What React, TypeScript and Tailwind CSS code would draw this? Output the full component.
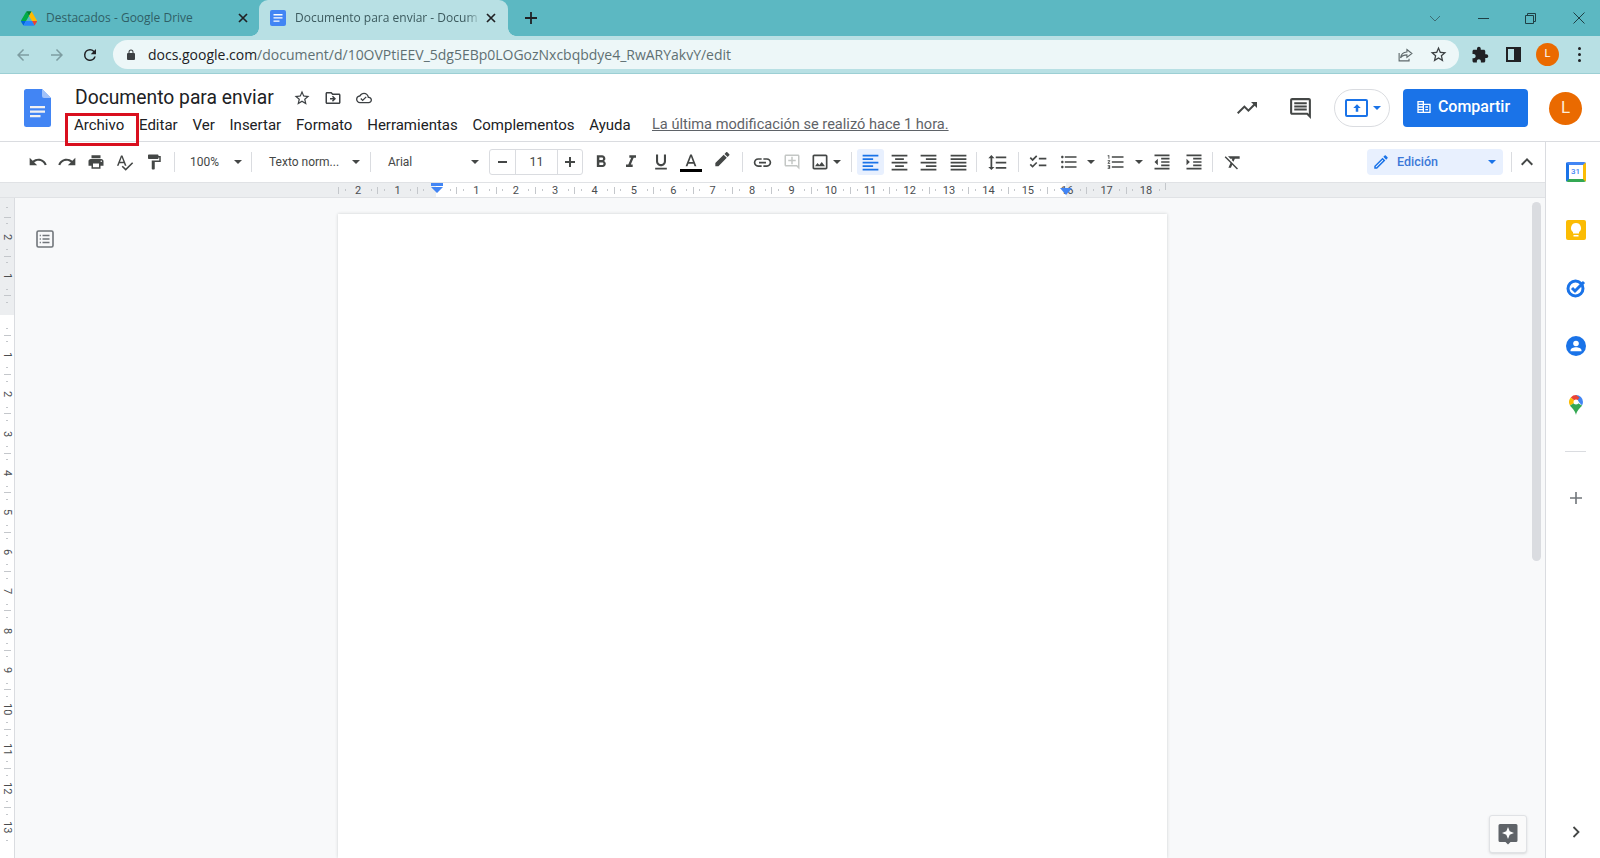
import React from "react";

const P = {
  undo: "M12.5 8c-2.65 0-5.05.99-6.9 2.6L2 7v9h9l-3.62-3.62c1.39-1.16 3.16-1.88 5.12-1.88 3.54 0 6.55 2.31 7.6 5.5l2.37-.78C21.08 11.03 17.15 8 12.5 8z",
  redo: "M18.4 10.6C16.55 8.99 14.15 8 11.5 8c-4.65 0-8.58 3.03-9.96 7.22L3.9 16c1.05-3.19 4.05-5.5 7.6-5.5 1.95 0 3.73.72 5.12 1.88L13 16h9V7l-3.6 3.6z",
  print: "M19 8H5c-1.66 0-3 1.34-3 3v6h4v4h12v-4h4v-6c0-1.66-1.34-3-3-3zm-3 11H8v-5h8v5zm3-7c-.55 0-1-.45-1-1s.45-1 1-1 1 .45 1 1-.45 1-1 1zm-1-9H6v4h12V3z",
  spell: "M12.45 16h2.09L9.43 3H7.57L2.46 16h2.09l1.12-3h5.64l1.14 3zm-6.02-5L8.5 5.48 10.57 11H6.43zm15.16.59l-8.09 8.09L9.83 16l-1.41 1.41 5.09 5.09L23 13l-1.41-1.41z",
  paint: "M18 4V3c0-.55-.45-1-1-1H5c-.55 0-1 .45-1 1v4c0 .55.45 1 1 1h12c.55 0 1-.45 1-1V6h1v4H9v11c0 .55.45 1 1 1h2c.55 0 1-.45 1-1v-9h8V4h-3z",
  bold: "M15.6 10.79c.97-.67 1.65-1.77 1.65-2.79 0-2.26-1.75-4-4-4H7v14h7.04c2.09 0 3.71-1.7 3.71-3.79 0-1.52-.86-2.82-2.15-3.42zM10 6.5h3c.83 0 1.5.67 1.5 1.5s-.67 1.5-1.5 1.5h-3v-3zm3.5 9H10v-3h3.5c.83 0 1.5.67 1.5 1.5s-.67 1.5-1.5 1.5z",
  italic: "M10 4v3h2.21l-3.42 8H6v3h8v-3h-2.21l3.42-8H18V4z",
  underline: "M12 17c3.31 0 6-2.69 6-6V3h-2.5v8c0 1.93-1.57 3.5-3.5 3.5S8.5 12.93 8.5 11V3H6v8c0 3.31 2.69 6 6 6zm-7 2v2h14v-2H5z",
  marker: "M17.75 7L14 3.25l-10 10V17h3.75l10-10zm2.96-2.96c.39-.39.39-1.02 0-1.41L18.37.29c-.39-.39-1.02-.39-1.41 0L15 2.25 18.75 6l1.96-1.96z",
  link: "M3.9 12c0-1.71 1.39-3.1 3.1-3.1h4V7H7c-2.76 0-5 2.24-5 5s2.24 5 5 5h4v-1.9H7c-1.71 0-3.1-1.39-3.1-3.1zM8 13h8v-2H8v2zm9-6h-4v1.9h4c1.71 0 3.1 1.39 3.1 3.1s-1.39 3.1-3.1 3.1h-4V17h4c2.76 0 5-2.24 5-5s-2.24-5-5-5z",
  addComment: "M21.99 4c0-1.1-.89-2-1.99-2H4c-1.1 0-2 .9-2 2v12c0 1.1.9 2 2 2h14l4 4-.01-18zM20 4v13.17L18.83 16H4V4h16zM13 5h-2v4H7v2h4v4h2v-4h4V9h-4z",
  image: "M19 5v14H5V5h14m0-2H5c-1.1 0-2 .9-2 2v14c0 1.1.9 2 2 2h14c1.1 0 2-.9 2-2V5c0-1.1-.9-2-2-2zm-4.86 8.86l-3 3.87L9 13.14 6 17h12l-3.86-5.14z",
  left: "M15 15H3v2h12v-2zm0-8H3v2h12V7zM3 13h18v-2H3v2zm0 8h18v-2H3v2zM3 3v2h18V3H3z",
  center: "M7 15v2h10v-2H7zm-4 6h18v-2H3v2zm0-8h18v-2H3v2zm4-6v2h10V7H7zM3 3v2h18V3H3z",
  right: "M3 21h18v-2H3v2zm6-4h12v-2H9v2zm-6-4h18v-2H3v2zm6-4h12V7H9v2zM3 3v2h18V3H3z",
  justify: "M3 21h18v-2H3v2zm0-4h18v-2H3v2zm0-4h18v-2H3v2zm0-4h18V7H3v2zm0-6v2h18V3H3z",
  spacing: "M6 7h2.5L5 3.5 1.5 7H4v10H1.5L5 20.5 8.5 17H6V7zm4-2v2h12V5H10zm0 14h12v-2H10v2zm0-6h12v-2H10v2z",
  check: "M22 7h-9v2h9V7zm0 8h-9v2h9v-2zM5.54 11L2 7.46l1.41-1.41 2.12 2.12 4.24-4.24 1.41 1.41L5.54 11zm0 8L2 15.46l1.41-1.41 2.12 2.12 4.24-4.24 1.41 1.41L5.54 19z",
  bullets: "M4 10.5c-.83 0-1.5.67-1.5 1.5s.67 1.5 1.5 1.5 1.5-.67 1.5-1.5-.67-1.5-1.5-1.5zm0-6c-.83 0-1.5.67-1.5 1.5S3.17 7.5 4 7.5 5.5 6.83 5.5 6 4.83 4.5 4 4.5zm0 12c-.83 0-1.5.68-1.5 1.5s.68 1.5 1.5 1.5 1.5-.68 1.5-1.5-.67-1.5-1.5-1.5zM7 19h14v-2H7v2zm0-6h14v-2H7v2zm0-8v2h14V5H7z",
  numbered: "M2 17h2v.5H3v1h1v.5H2v1h3v-4H2v1zm1-9h1V4H2v1h1v3zm-1 3h1.8L2 13.1v.9h3v-1H3.2L5 10.9V10H2v1zm5-6v2h14V5H7zm0 14h14v-2H7v2zm0-6h14v-2H7v2z",
  outdent: "M11 17h10v-2H11v2zm-8-5l4 4V8l-4 4zm0 9h18v-2H3v2zM3 3v2h18V3H3zm8 6h10V7H11v2zm0 4h10v-2H11v2z",
  indent: "M3 21h18v-2H3v2zM3 8v8l4-4-4-4zm8 9h10v-2H11v2zM3 3v2h18V3H3zm8 6h10V7H11v2zm0 4h10v-2H11v2z",
  clear: "M3.27 5L2 6.27l6.97 6.97L6.5 19h3l1.57-3.66L16.73 21 18 19.73 3.55 5.27 3.27 5zM6 5v.18L8.82 8h2.4l-.72 1.68 2.1 2.1L14.21 8H20V5H6z",
  pencil: "M14.06 9.02l.92.92L5.92 19H5v-.92l9.06-9.06M17.66 3c-.25 0-.51.1-.7.29l-1.83 1.83 3.75 3.75 1.83-1.83c.39-.39.39-1.02 0-1.41l-2.34-2.34c-.2-.2-.45-.29-.71-.29zm-3.6 3.19L3 17.25V21h3.75L17.81 9.94l-3.75-3.75z",
  less: "M12 8l-6 6 1.41 1.41L12 10.83l4.59 4.58L18 14z",
  trend: "M16 6l2.29 2.29-4.88 4.88-4-4L2 16.59 3.41 18l6-6 4 4 6.3-6.29L22 12V6z",
  comment: "M21.99 4c0-1.1-.89-2-1.99-2H4c-1.1 0-2 .9-2 2v12c0 1.1.9 2 2 2h14l4 4-.01-18zM20 4v13.17L18.83 16H4V4h16zM6 12h12v2H6zm0-3h12v2H6zm0-3h12v2H6z",
  domain: "M12 7V3H2v18h20V7H12zM10 19H4v-2h6v2zm0-4H4v-2h6v2zm0-4H4V9h6v2zm0-4H4V5h6v2zm10 12h-8V9h8v10zm-2-8h-4v2h4v-2zm0 4h-4v2h4v-2z",
  star: "M22 9.24l-7.19-.62L12 2 9.19 8.63 2 9.24l5.46 4.73L5.82 21 12 17.27 18.18 21l-1.63-7.03L22 9.24zM12 15.4l-3.76 2.27 1-4.28-3.32-2.88 4.38-.38L12 6.1l1.71 4.04 4.38.38-3.32 2.88 1 4.28L12 15.4z",
  move: "M20 6h-8l-2-2H4c-1.1 0-1.99.9-1.99 2L2 18c0 1.1.9 2 2 2h16c1.1 0 2-.9 2-2V8c0-1.1-.9-2-2-2zm0 12H4V6h5.17l2 2H20v10zm-8.01-9l-1.41 1.41L12.16 12H8v2h4.16l-1.59 1.59L11.99 17 16 13.01 11.99 9z",
  cloud: "M19.35 10.04C18.67 6.59 15.64 4 12 4 9.11 4 6.6 5.64 5.35 8.04 2.34 8.36 0 10.91 0 14c0 3.31 2.69 6 6 6h13c2.76 0 5-2.24 5-5 0-2.64-2.05-4.78-4.65-4.96zM19 18H6c-2.21 0-4-1.79-4-4 0-2.05 1.53-3.76 3.56-3.97l1.07-.11.5-.95C8.08 7.14 9.94 6 12 6c2.62 0 4.88 1.86 5.39 4.43l.3 1.5 1.53.11c1.56.1 2.78 1.41 2.78 2.96 0 1.65-1.35 3-3 3zm-9-3.82l-2.09-2.09L6.5 13.5 10 17l6.01-6.01-1.41-1.41z",
  puzzle: "M20.5 11H19V7c0-1.1-.9-2-2-2h-4V3.5C13 2.12 11.88 1 10.5 1S8 2.12 8 3.5V5H4c-1.1 0-1.99.9-1.99 2v3.8H3.5c1.49 0 2.7 1.21 2.7 2.7s-1.21 2.7-2.7 2.7H2V20c0 1.1.9 2 2 2h3.8v-1.5c0-1.49 1.21-2.7 2.7-2.7 1.49 0 2.7 1.21 2.7 2.7V22H17c1.1 0 2-.9 2-2v-4h1.5c1.38 0 2.5-1.12 2.5-2.5S21.88 11 20.5 11z",
  textA: "M11 3L5.5 17h2.25l1.12-3h6.25l1.12 3h2.25L13 3h-2zm-1.38 9L12 5.67 14.38 12H9.62z",
};

function I({ d, s = 18, c = "#444746" }: { d: string; s?: number; c?: string }) {
  return (
    <svg width={s} height={s} viewBox="0 0 24 24" fill={c} className="block shrink-0">
      <path d={d} />
    </svg>
  );
}

function Caret({ c = "#444746" }: { c?: string }) {
  return <span className="block h-0 w-0 shrink-0 border-x-[4px] border-t-[4px] border-x-transparent" style={{ borderTopColor: c }} />;
}

function Tb({ d, w = "w-[29px]", s = 18, c }: { d: string; w?: string; s?: number; c?: string }) {
  return (
    <div className={`${w} flex h-[26px] shrink-0 items-center justify-center`}>
      <I d={d} s={s} c={c} />
    </div>
  );
}

function Sep({ className = "" }: { className?: string }) {
  return <div className={`h-[20px] w-px shrink-0 bg-[#dadce0] ${className}`} />;
}

function DriveLogo() {
  return (
    <svg width="16" height="15" viewBox="0 0 87.3 78" className="block shrink-0">
      <path d="M6.6 66.85l3.85 6.65c.8 1.4 1.95 2.5 3.3 3.3L27.5 53H0c0 1.55.4 3.1 1.2 4.5z" fill="#0066da" />
      <path d="M43.65 25L29.9 1.2c-1.35.8-2.5 1.9-3.3 3.3L1.2 48.5C.4 49.9 0 51.45 0 53h27.5z" fill="#00ac47" />
      <path d="M73.55 76.8c1.35-.8 2.5-1.9 3.3-3.3l1.6-2.75 7.65-13.25c.8-1.4 1.2-2.95 1.2-4.5H59.8l5.85 11.5z" fill="#ea4335" />
      <path d="M43.65 25L57.4 1.2C56.05.4 54.5 0 52.9 0H34.4c-1.6 0-3.15.45-4.5 1.2z" fill="#00832d" />
      <path d="M59.8 53H27.5L13.75 76.8c1.35.8 2.9 1.2 4.5 1.2h50.8c1.6 0 3.15-.45 4.5-1.2z" fill="#2684fc" />
      <path d="M73.4 26.5L60.7 4.5c-.8-1.4-1.95-2.5-3.3-3.3L43.65 25 59.8 53h27.45c0-1.55-.4-3.1-1.2-4.5z" fill="#ffba00" />
    </svg>
  );
}

function DocsLogo({ w, h }: { w: number; h: number }) {
  return (
    <svg width={w} height={h} viewBox="0 0 27 38" className="block shrink-0">
      <path d="M2.5 0H18l9 9v26.5a2.5 2.5 0 0 1-2.5 2.5h-22A2.5 2.5 0 0 1 0 35.5v-33A2.5 2.5 0 0 1 2.5 0z" fill="#4285f4" />
      <path d="M18 0l9 9h-7a2 2 0 0 1-2-2z" fill="#a1c2fa" />
      <path d="M6 17h15v2.2H6zM6 21.5h15v2.2H6zM6 26h10.5v2.2H6z" fill="#f1f1f1" />
    </svg>
  );
}

function DocsTabIcon() {
  return (
    <svg width="16" height="16" viewBox="0 0 16 16" className="block shrink-0">
      <rect width="16" height="16" rx="2" fill="#4285f4" />
      <path d="M3.5 4h9v1.4h-9zM3.5 7.2h9v1.4h-9zM3.5 10.4h6v1.4h-6z" fill="#ffffff" />
    </svg>
  );
}

function Tick({ big }: { big?: boolean }) {
  return <span className={`block w-px shrink-0 ${big ? "h-[7px] bg-[#c4c7cb]" : "h-[2px] bg-[#c4c7cb]"}`} />;
}

function HCell({ n, bg }: { n?: number; bg: string }) {
  return (
    <div className={`flex h-full w-[39.4px] shrink-0 items-center justify-between ${bg}`}>
      <Tick big />
      <Tick />
      <span className="w-[14px] text-center text-[11px] leading-none text-[#4a4d50]">{n}</span>
      <Tick />
      <span className="w-0" />
    </div>
  );
}

function VTick({ big }: { big?: boolean }) {
  return <span className={`block h-px shrink-0 ${big ? "w-[7px] bg-[#c4c7cb]" : "w-[2px] bg-[#c4c7cb]"}`} />;
}

function VCell({ n, bg }: { n?: number; bg: string }) {
  return (
    <div className={`flex h-[39.4px] w-full shrink-0 flex-col items-center justify-between ${bg}`}>
      <VTick big />
      <VTick />
      <span className="flex h-[14px] items-center justify-center text-[11px] leading-none text-[#4a4d50] [writing-mode:vertical-rl]">{n}</span>
      <VTick />
      <span className="h-0" />
    </div>
  );
}

const menu = ["Archivo", "Editar", "Ver", "Insertar", "Formato", "Herramientas", "Complementos", "Ayuda"];

export default function App() {
  const sans = { fontFamily: "Roboto, 'Liberation Sans', sans-serif" };
  return (
    <div className="flex h-[858px] w-[1600px] flex-col overflow-hidden bg-white" style={sans}>
      {/* Tab strip */}
      <div className="flex h-[36px] shrink-0 items-stretch bg-[#5cb8c2] font-['Open_Sans',sans-serif]">
        <div className="flex w-[259px] shrink-0 items-center pl-[21px] text-[12px] text-[#2f5f66]">
          <DriveLogo />
          <span className="ml-[9px] w-[192px] truncate">Destacados - Google Drive</span>
          <svg width="10" height="10" viewBox="0 0 10 10" className="block shrink-0"><path d="M1 1l8 8M9 1L1 9" stroke="#202124" strokeWidth="1.7" /></svg>
        </div>
        <div className="relative flex w-[249px] shrink-0 items-center rounded-t-[9px] bg-[#b8e0e4] pl-[11px] text-[12px] text-[#3c5a5e]">
          <span className="absolute bottom-0 left-[-8px] h-[8px] w-[8px] bg-[radial-gradient(circle_at_0_0,#5cb8c2_7.5px,#b8e0e4_8px)]" />
          <span className="absolute bottom-0 right-[-8px] h-[8px] w-[8px] bg-[radial-gradient(circle_at_100%_0,#5cb8c2_7.5px,#b8e0e4_8px)]" />
          <DocsTabIcon />
          <span className="ml-[9px] w-[188px] whitespace-nowrap [mask-image:linear-gradient(to_right,black_91%,transparent_99%)]">Documento para enviar - Docum</span>
          <svg width="10" height="10" viewBox="0 0 10 10" className="ml-[3px] block shrink-0"><path d="M1 1l8 8M9 1L1 9" stroke="#202124" strokeWidth="1.7" /></svg>
        </div>
        <div className="ml-[17px] flex items-center">
          <svg width="12" height="12" viewBox="0 0 12 12" className="block"><path d="M6 0v12M0 6h12" stroke="#202124" strokeWidth="1.8" /></svg>
        </div>
        <div className="flex-1" />
        <div className="flex items-center">
          <svg width="12" height="7" viewBox="0 0 12 7" className="block"><path d="M1 1l5 5 5-5" fill="none" stroke="#3d6d73" strokeWidth="1" /></svg>
          <div className="ml-[37px] h-px w-[11px] bg-[#1f3f44]" />
          <svg width="11" height="11" viewBox="0 0 11 11" className="ml-[36px] block"><path d="M.5 2.5h8v8h-8zM2.5 2.5v-2h8v8h-2" fill="none" stroke="#1f3f44" strokeWidth="1" /></svg>
          <svg width="12" height="12" viewBox="0 0 12 12" className="ml-[37px] mr-[15px] block"><path d="M.5.5l11 11M11.5.5l-11 11" stroke="#1f3f44" strokeWidth="1" /></svg>
        </div>
      </div>

      {/* Address bar */}
      <div className="flex h-[38px] shrink-0 items-center border-b border-[#9ccfd4] bg-[#b8e0e4]">
        <div className="ml-[14px]"><svg width="18" height="18" viewBox="0 0 24 24" className="block"><path d="M20 11H7.83l5.59-5.59L12 4l-8 8 8 8 1.41-1.41L7.83 13H20z" fill="#7d9da1" /></svg></div>
        <div className="ml-[16px]"><svg width="18" height="18" viewBox="0 0 24 24" className="block"><path d="M12 4l-1.41 1.41L16.17 11H4v2h12.17l-5.58 5.59L12 20l8-8z" fill="#7d9da1" /></svg></div>
        <div className="ml-[15px]"><svg width="18" height="18" viewBox="0 0 24 24" className="block"><path d="M17.65 6.35A7.96 7.96 0 0 0 12 4a8 8 0 1 0 7.73 10h-2.08A6 6 0 1 1 12 6c1.66 0 3.14.69 4.22 1.78L13 11h7V4l-2.35 2.35z" fill="#202124" /></svg></div>
        <div className="ml-[14px] flex h-[29px] w-[1346px] shrink-0 items-center rounded-full bg-[#edf7f8]">
          <svg width="12" height="12" viewBox="0 0 24 24" className="ml-[12px] block"><path d="M18 8h-1V6A5 5 0 0 0 7 6v2H6a2 2 0 0 0-2 2v10a2 2 0 0 0 2 2h12a2 2 0 0 0 2-2V10a2 2 0 0 0-2-2zM9 6a3 3 0 0 1 6 0v2H9V6z" fill="#3c4043" /></svg>
          <span className="ml-[11px] whitespace-nowrap font-['Open_Sans',sans-serif] text-[14px] tracking-[-0.01px] text-[#5f7073]">
            <span className="text-[#202124]">docs.google.com</span>/document/d/10OVPtiEEV_5dg5EBp0LOGozNxcbqbdye4_RwARYakvY/edit
          </span>
          <div className="flex-1" />
          <svg width="17" height="17" viewBox="0 0 24 24" fill="none" stroke="#5f6a6c" strokeWidth="1.6" className="block"><path d="M14 5l7 5.5-7 5.5v-3.4c-4 0-7 1.2-9 4.2.6-4.4 3.6-8 9-8.4zM3 10v11h14v-3" /></svg>
          <div className="ml-[15px] mr-[11px]"><I d={P.star} s={19} c="#3c4043" /></div>
        </div>
        <div className="ml-[12px]"><I d={P.puzzle} s={18} c="#202124" /></div>
        <div className="ml-[17px] flex h-[15px] w-[15px] items-center justify-end border-2 border-[#202124]"><div className="h-full w-[5px] bg-[#202124]" /></div>
        <div className="ml-[15px] flex h-[23px] w-[23px] items-center justify-center rounded-full bg-[#ea6a00] text-[11px] text-white">L</div>
        <div className="ml-[19px] flex flex-col gap-[3px]">
          <span className="h-[3px] w-[3px] rounded-full bg-[#202124]" />
          <span className="h-[3px] w-[3px] rounded-full bg-[#202124]" />
          <span className="h-[3px] w-[3px] rounded-full bg-[#202124]" />
        </div>
      </div>

      {/* Docs header */}
      <div className="flex h-[68px] shrink-0 border-b border-[#dadce0] bg-white">
        <div className="ml-[24px] mt-[15px]"><DocsLogo w={27} h={38} /></div>
        <div className="ml-[23px] flex flex-col">
          <div className="mt-[11px] flex h-[26px] items-center pl-[1px]">
            <span className="text-[19.3px] leading-none text-[#202124]">Documento para enviar</span>
            <div className="ml-[19px]"><I d={P.star} s={18} c="#3c4043" /></div>
            <div className="ml-[13px]"><I d={P.move} s={18} c="#3c4043" /></div>
            <div className="ml-[14px]"><I d={P.cloud} s={16} c="#3c4043" /></div>
          </div>
          <div className="relative mt-[4px] flex h-[20px] items-center gap-[14.8px] whitespace-nowrap text-[15px] text-[#202124]">
            {menu.map((m) => (
              <span key={m}>{m}</span>
            ))}
            <span className="ml-[6.5px] text-[14.6px] text-[#5f6368] underline">La última modificación se realizó hace 1 hora.</span>
            <div className="absolute left-[-9px] top-[-2px] h-[33px] w-[74px] border-[3px] border-[#d90f1e]" />
          </div>
        </div>
        <div className="flex-1" />
        <div className="mt-[15px] flex h-[38px] items-center">
          <I d={P.trend} s={24} c="#444746" />
          <div className="ml-[29px]"><I d={P.comment} s={25} c="#444746" /></div>
          <div className="ml-[21px] flex h-[38px] w-[56px] items-center justify-center gap-[5px] rounded-full border border-[#dadce0] bg-white pl-[2px]">
            <div className="flex h-[18px] w-[23px] items-center justify-center rounded-[2px] border-2 border-[#1a73e8]">
              <svg width="10" height="10" viewBox="0 0 24 24" className="block"><path d="M12 3l9 9h-6v9H9v-9H3z" fill="#1a73e8" /></svg>
            </div>
            <Caret c="#1a73e8" />
          </div>
          <div className="ml-[13px] flex h-[38px] w-[125px] items-center justify-center gap-[6px] rounded-[4px] bg-[#1a73e8] pb-[2px] pr-[5px] text-[16px] font-medium text-white">
            <I d={P.domain} s={16} c="#ffffff" />
            Compartir
          </div>
          <div className="ml-[21px] mr-[18px] flex h-[33px] w-[33px] items-center justify-center rounded-full bg-[#ea6a00] text-[17px] text-[#fdebd8]">L</div>
        </div>
      </div>

      {/* Body */}
      <div className="flex min-h-0 flex-1">
        <div className="flex min-w-0 flex-1 flex-col">
          {/* Toolbar */}
          <div className="flex h-[40px] shrink-0 items-center pl-[23px] text-[12px] text-[#444746]">
            <Tb d={P.undo} s={20} /><Tb d={P.redo} s={20} /><Tb d={P.print} /><Tb d={P.spell} s={19} /><Tb d={P.paint} />
            <Sep className="ml-[6px]" />
            <div className="flex w-[76px] shrink-0 items-center pl-[15px]">
              <span>100%</span><span className="ml-[15px]"><Caret /></span>
            </div>
            <Sep />
            <div className="flex w-[118px] shrink-0 items-center pl-[17px]">
              <span className="w-[72px] whitespace-nowrap">Texto norm...</span><span className="ml-[11px]"><Caret /></span>
            </div>
            <Sep />
            <div className="flex w-[118px] shrink-0 items-center pl-[17px]">
              <span className="w-[83px]">Arial</span><span><Caret /></span>
            </div>
            <div className="flex h-[26px] w-[94px] shrink-0 items-stretch rounded-[3px] border border-[#dadce0]">
              <div className="flex w-[26px] items-center justify-center border-r border-[#dadce0]"><span className="h-[2px] w-[9px] bg-[#444746]" /></div>
              <div className="flex flex-1 items-center justify-center text-[12.5px]">11</div>
              <div className="flex w-[25px] items-center justify-center border-l border-[#dadce0]"><svg width="10" height="10" viewBox="0 0 10 10" className="block"><path d="M5 0v10M0 5h10" stroke="#444746" strokeWidth="2" /></svg></div>
            </div>
            <div className="ml-[3px] flex items-center">
              <Tb d={P.bold} w="w-[30px]" s={20} /><Tb d={P.italic} w="w-[30px]" s={20} /><Tb d={P.underline} w="w-[30px]" s={20} />
              <div className="flex h-[26px] w-[30px] shrink-0 flex-col items-center justify-center">
                <I d={P.textA} s={20} />
                <span className="mt-[-3px] h-[3px] w-[22px] bg-black" />
              </div>
              <div className="ml-[1px]"><Tb d={P.marker} w="w-[30px]" s={20} /></div>
            </div>
            <Sep className="ml-[5px]" />
            <Tb d={P.link} w="w-[38px]" s={21} />
            <Tb d={P.addComment} w="w-[21px]" c="#c4c7c5" />
            <div className="ml-[4px] flex w-[38px] shrink-0 items-center justify-center gap-[3px]">
              <I d={P.image} s={20} /><Caret />
            </div>
            <Sep className="ml-[7px]" />
            <div className="ml-[5px] flex h-[26px] w-[27px] shrink-0 items-center justify-center rounded-[3px] bg-[#e8f0fe]"><I d={P.left} c="#1a73e8" s={21} /></div>
            <Tb d={P.center} w="w-[30px]" s={21} /><Tb d={P.right} w="w-[29px]" s={21} /><Tb d={P.justify} w="w-[30px]" s={21} />
            <Sep className="ml-[3px]" />
            <Tb d={P.spacing} w="w-[41px]" s={21} />
            <Sep />
            <Tb d={P.check} w="w-[38px]" s={20} />
            <Tb d={P.bullets} w="w-[23px]" s={20} />
            <div className="ml-[7px]"><Caret /></div>
            <div className="ml-[6px]"><Tb d={P.numbered} w="w-[29px]" s={20} /></div>
            <div className="ml-[5px]"><Caret /></div>
            <Tb d={P.outdent} w="w-[38px]" s={20} />
            <Tb d={P.indent} w="w-[25px]" s={20} />
            <Sep className="ml-[6px]" />
            <Tb d={P.clear} w="w-[40px]" s={20} />
            <div className="ml-[114px] flex h-[26px] w-[136px] shrink-0 items-center rounded-[4px] bg-[#e8f0fe] pl-[5px] text-[#1a73e8]">
              <I d={P.pencil} s={18} c="#1a73e8" />
              <span className="ml-[7px] text-[12.5px] font-medium text-[#3b78d8]">Edición</span>
              <span className="ml-[50px]"><Caret c="#1a73e8" /></span>
            </div>
            <Sep className="ml-[8px]" />
            <div className="ml-[3px]"><I d={P.less} s={24} /></div>
          </div>

          {/* Horizontal ruler */}
          <div className="relative flex h-[16px] shrink-0 items-stretch border-y border-[#e0e2e5] bg-[#eceef0] pl-[338px]">
            <HCell n={2} bg="bg-[#eceef0]" />
            <HCell n={1} bg="bg-[#eceef0]" />
            <div className="flex h-full w-[39.4px] shrink-0 items-center justify-between bg-[linear-gradient(to_right,#eceef0_50%,#ffffff_50%)]"><Tick big /><Tick /><span className="w-[14px]" /><Tick /><span className="w-0" /></div>
            {Array.from({ length: 15 }, (_, i) => <HCell key={i} n={i + 1} bg="bg-white" />)}
            <div className="flex h-full w-[39.4px] shrink-0 items-center justify-between bg-[linear-gradient(to_right,#ffffff_50%,#eceef0_50%)]"><Tick big /><Tick /><span className="w-[14px] text-center text-[11px] leading-none text-[#4a4d50]">16</span><Tick /><span className="w-0" /></div>
            <HCell n={17} bg="bg-[#eceef0]" />
            <HCell n={18} bg="bg-[#eceef0]" />
            <Tick big />
            <svg width="12" height="11" viewBox="0 0 12 11" className="absolute left-[431px] top-0 block"><path d="M0 0h12v3H0zM0 4h12L6 10z" fill="#4285f4" /></svg>
            <svg width="12" height="8" viewBox="0 0 12 8" className="absolute left-[1060px] top-[5px] block"><path d="M0 0h12L6 7z" fill="#4285f4" /></svg>
          </div>

          {/* Canvas */}
          <div className="relative flex min-h-0 flex-1 bg-[#f8f9fa]">
            <div className="flex w-[15px] shrink-0 flex-col overflow-hidden border-r border-[#dadce0] bg-white">
              <div className="flex h-[18.5px] shrink-0 items-center justify-center bg-[#eceef0]"><VTick /></div>
              <VCell n={2} bg="bg-[#eceef0]" />
              <VCell n={1} bg="bg-[#eceef0]" />
              <div className="flex h-[39.4px] w-full shrink-0 flex-col items-center justify-between bg-[linear-gradient(to_bottom,#eceef0_50%,#ffffff_50%)]"><VTick big /><VTick /><span className="h-[14px]" /><VTick /><span className="h-0" /></div>
              {Array.from({ length: 13 }, (_, i) => <VCell key={i} n={i + 1} bg="bg-white" />)}
            </div>
            <div className="w-[323px] shrink-0 pl-[21px] pt-[32px]">
              <svg width="18" height="18" viewBox="0 0 18 18" className="block" fill="none">
                <rect x="1" y="1" width="16" height="16" rx="1.5" stroke="#70757a" strokeWidth="1.6" />
                <path d="M6.5 5.5h7M6.5 9h7M6.5 12.5h7" stroke="#70757a" strokeWidth="1.3" />
                <path d="M3.7 5.5h1.2M3.7 9h1.2M3.7 12.5h1.2" stroke="#70757a" strokeWidth="1.3" />
              </svg>
            </div>
            <div className="mt-[16px] w-[829px] shrink-0 bg-white shadow-[0_0_3px_rgba(60,64,67,0.22)]" />
            <div className="flex-1" />
            <div className="mr-[4px] mt-[4px] h-[359px] w-[9px] shrink-0 rounded-full bg-[#dadce0]" />
            <div className="absolute left-[1489px] top-[617px] flex h-[38px] w-[38px] items-center justify-center rounded-[3px] border border-[#e0e2e5] bg-[#fafafa] shadow-sm">
              <svg width="20" height="22" viewBox="0 0 20 22" className="block">
                <path d="M2 1h16a1.5 1.5 0 0 1 1.5 1.5v15A1.5 1.5 0 0 1 18 19h-5.5L10 21.5 7.5 19H2A1.5 1.5 0 0 1 .5 17.5v-15A1.5 1.5 0 0 1 2 1z" fill="#5f6368" />
                <path d="M10 4l1.7 4.3 4.3 1.7-4.3 1.7-1.7 4.300-1.7-4.300L4 10l4.300-1.700z" fill="#ffffff" />
              </svg>
            </div>
          </div>
        </div>

        {/* Side panel */}
        <div className="flex w-[55px] shrink-0 flex-col items-center border-l border-[#dadce0] bg-white pl-[5px]">
          <div className="mt-[20px] flex h-[20px] w-[20px] items-center justify-center rounded-[2px] border-[3px] border-b-[#34a853] border-l-[#1a73e8] border-r-[#fbbc04] border-t-[#4285f4] bg-white text-[8px] font-medium text-[#4285f4]">31</div>
          <div className="mt-[38px] flex h-[20px] w-[20px] items-center justify-center rounded-[2px] bg-[#fbbc04]">
            <svg width="12" height="14" viewBox="0 0 12 14" className="block"><path d="M6 0a5 5 0 0 1 3 9v1.5H3V9a5 5 0 0 1 3-9zM3.5 12h5v1.5h-5z" fill="#ffffff" /></svg>
          </div>
          <div className="mt-[38px]">
            <svg width="20" height="20" viewBox="0 0 20 20" className="block">
              <circle cx="9.5" cy="10.5" r="7.5" fill="none" stroke="#1a73e8" strokeWidth="3" />
              <path d="M6 10l3 3 9-9" fill="none" stroke="#1a73e8" strokeWidth="3" />
            </svg>
          </div>
          <div className="mt-[38px]">
            <svg width="20" height="20" viewBox="0 0 20 20" className="block">
              <circle cx="10" cy="10" r="10" fill="#1a73e8" />
              <circle cx="10" cy="7.5" r="2.8" fill="#ffffff" />
              <path d="M4.5 14.5c0-2 3-3.2 5.5-3.2s5.500 1.200 5.500 3.200v.8h-11z" fill="#ffffff" />
            </svg>
          </div>
          <div className="mt-[39px]">
            <svg width="14" height="20" viewBox="0 0 14 20" className="block">
              <path d="M7 0a7 7 0 0 1 7 7c0 1.3-.4 2.5-1 3.5L7 4z" fill="#4285f4" />
              <path d="M7 0A7 7 0 0 0 1.8 2.4L7 7l3.5-4.500z" fill="#ea4335" />
              <path d="M1.8 2.4A7 7 0 0 0 1 10.5L7 7z" fill="#fbbc04" />
              <path d="M1 10.5C2.5 13 6 15 7 20c1-5 4.500-7 6-9.500L7 7z" fill="#34a853" />
              <circle cx="7" cy="7" r="2.5" fill="#ffffff" />
            </svg>
          </div>
          <div className="mt-[36px] h-px w-[21px] bg-[#dadce0]" />
          <div className="mt-[39px]"><svg width="14" height="14" viewBox="0 0 14 14" className="block"><path d="M7 1v12M1 7h12" stroke="#70757a" strokeWidth="1.6" /></svg></div>
          <div className="flex-1" />
          <div className="mb-[20px]"><svg width="8" height="12" viewBox="0 0 8 12" className="block"><path d="M1.5 1l5 5-5 5" fill="none" stroke="#444746" strokeWidth="1.8" /></svg></div>
        </div>
      </div>
    </div>
  );
}
